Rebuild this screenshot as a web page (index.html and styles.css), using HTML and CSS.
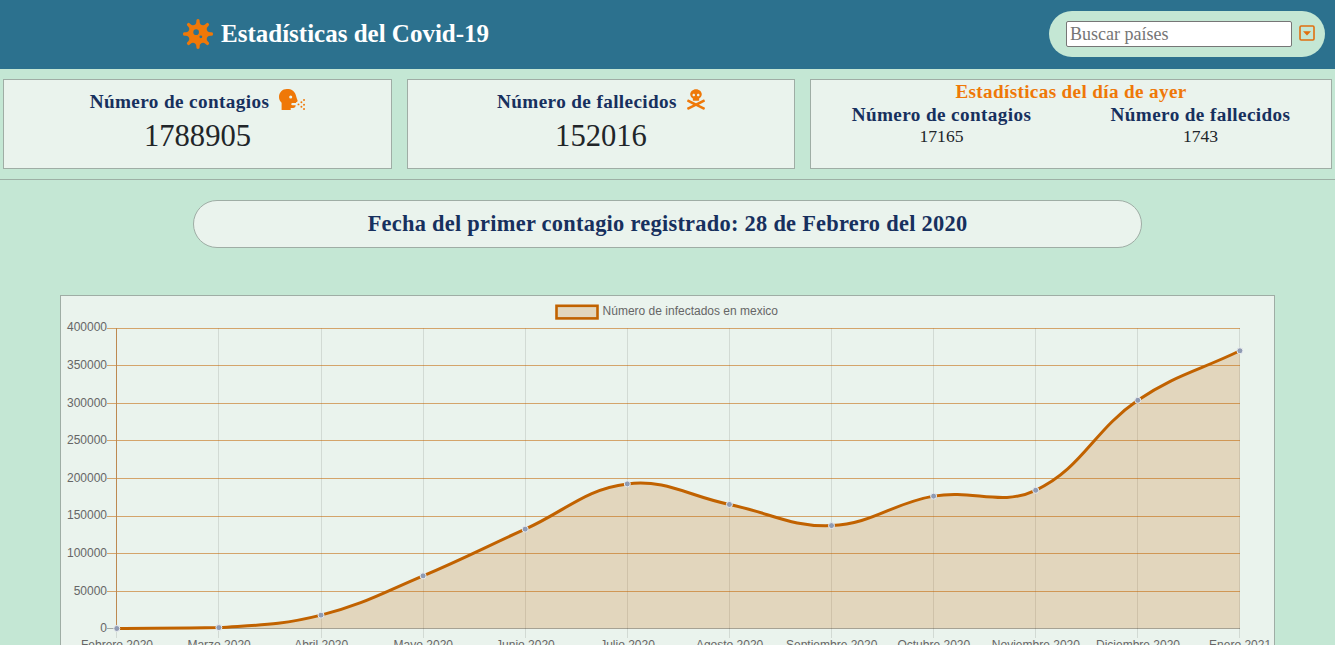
FILE: index.html
```html
<!DOCTYPE html>
<html lang="es">
<head>
<meta charset="utf-8">
<title>Estadísticas del Covid-19</title>
<link rel="stylesheet" href="styles.css">
</head>
<body>
<header class="header">
  <div class="brand">
    <svg class="brand-icon" viewBox="0 0 512 512"><path d="M483.55,227.55H462c-50.68,0-76.07-61.27-40.23-97.11L437,115.19A28.44,28.44,0,0,0,396.8,75L381.56,90.22c-35.84,35.83-97.11,10.45-97.11-40.23V28.44a28.45,28.45,0,0,0-56.9,0V50c0,50.68-61.27,76.06-97.11,40.23L115.2,75A28.44,28.44,0,0,0,75,115.19l15.25,15.25c35.84,35.84,10.45,97.11-40.23,97.11H28.45a28.45,28.45,0,1,0,0,56.89H50c50.68,0,76.07,61.28,40.23,97.12L75,396.8A28.45,28.45,0,0,0,115.2,437l15.24-15.25c35.84-35.84,97.11-10.45,97.11,40.23v21.54a28.45,28.45,0,0,0,56.9,0V462c0-50.68,61.27-76.07,97.11-40.23L396.8,437A28.45,28.45,0,0,0,437,396.8l-15.25-15.24c-35.84-35.84-10.45-97.12,40.23-97.12h21.54a28.45,28.45,0,1,0,0-56.89ZM224,272a48,48,0,1,1,48-48A48,48,0,0,1,224,272Zm80,56a24,24,0,1,1,24-24A24,24,0,0,1,304,328Z"/></svg>
    <h1 class="brand-title">Estadísticas del Covid-19</h1>
  </div>
  <div class="search">
    <input class="search-input" type="text" placeholder="Buscar países">
    <svg class="search-icon" viewBox="0 0 16 16"><rect x="1" y="1" width="14" height="14" rx="1.2" fill="none" stroke="currentColor" stroke-width="1.6"/><path d="M4 6.2h8L8 10.5z" fill="currentColor"/></svg>
  </div>
</header>
<section class="stats">
  <article class="card">
    <h2 class="card-title">Número de contagios <svg class="cough" viewBox="0 0 640 512"><path fill-rule="evenodd" d="M455 275c-21-47.1-38.5-131.7-63.1-176.7C350 30 290 0 234.1 0H192C86 0 0 86 0 192c0 56.8 24.8 107.6 64 142.9V512h224v-48h64a64 64 0 0 0 60-64H330a24 24 0 0 1 0-56h92v-24a32 32 0 0 0 33-45zM288 232a38 38 0 1 1 0-76 38 38 0 0 1 0 76z"/><circle cx="616" cy="270" r="24"/><circle cx="552" cy="322" r="24"/><circle cx="616" cy="384" r="24"/><circle cx="480" cy="376" r="24"/><circle cx="552" cy="432" r="24"/><circle cx="616" cy="488" r="24"/></svg></h2>
    <p class="card-number">1788905</p>
  </article>
  <article class="card">
    <h2 class="card-title">Número de fallecidos <svg class="skull" viewBox="0 0 448 512"><path d="M439.15 453.06L297.17 384l141.99-69.06c7.9-3.95 11.11-13.56 7.15-21.46L432 264.85c-3.95-7.9-13.56-11.11-21.47-7.16L224 348.41 37.47 257.69c-7.9-3.95-17.51-.75-21.47 7.16L1.69 293.48c-3.95 7.9-.75 17.51 7.15 21.46L150.83 384 8.85 453.06c-7.9 3.95-11.11 13.56-7.15 21.47l14.31 28.63c3.95 7.9 13.56 11.11 21.47 7.15L224 419.59l186.53 90.72c7.9 3.95 17.51.75 21.47-7.15l14.31-28.63c3.95-7.91.74-17.52-7.16-21.47zM150 237.28l-5.48 25.87c-2.67 12.62 5.42 24.85 16.45 24.85h126.08c11.03 0 19.12-12.23 16.45-24.85l-5.5-25.87c41.78-22.41 70-62.75 70-109.28C368 57.31 303.53 0 224 0S80 57.31 80 128c0 46.53 28.22 86.87 70 109.28zM280 112c17.65 0 32 14.35 32 32s-14.35 32-32 32-32-14.35-32-32 14.35-32 32-32zm-112 0c17.65 0 32 14.35 32 32s-14.35 32-32 32-32-14.35-32-32 14.35-32 32-32z"/></svg></h2>
    <p class="card-number">152016</p>
  </article>
  <article class="card card-day">
    <h2 class="day-title">Estadísticas del día de ayer</h2>
    <div class="day-grid">
      <div><h3 class="day-label">Número de contagios</h3><p class="day-number">17165</p></div>
      <div><h3 class="day-label">Número de fallecidos</h3><p class="day-number">1743</p></div>
    </div>
  </article>
</section>
<main class="main">
  <h2 class="first-date">Fecha del primer contagio registrado: 28 de Febrero del 2020</h2>
  <div class="chart-panel"><svg class="chart" id="chart" viewBox="61 296 1213 400"></svg></div>
</main>
<script src="chart.js"></script>
</body>
</html>
```
FILE: styles.css
```css
* { box-sizing: border-box; margin: 0; padding: 0; }
body {
  height: 645px;
  overflow: hidden;
  background: #c4e7d4;
  color: #212529;
  font-family: "Liberation Serif", "Times New Roman", serif;
}
.header {
  display: flex;
  justify-content: space-between;
  align-items: center;
  height: 69px;
  padding: 0 10px 0 183px;
  background: #2c718e;
}
.brand { display: flex; align-items: center; gap: 8px; margin-bottom: 2px; }
.brand-icon { width: 30px; height: 30px; fill: #ef7808; }
.brand-title { color: #fff; font-size: 25px; line-height: 30px; white-space: nowrap; }
.search {
  display: flex;
  align-items: center;
  gap: 7px;
  width: 276px;
  height: 46px;
  margin-bottom: 1px;
  padding-left: 17px;
  border-radius: 23px;
  background: #c4e7d4;
}
.search-input {
  width: 226px;
  height: 26px;
  padding: 1px 3px;
  border: 1px solid #767676;
  border-radius: 2px;
  background: #fff;
  font-family: inherit;
  font-size: 18px;
}
.search-input::placeholder { color: #757575; }
.search-icon { width: 16px; height: 16px; color: #e0700f; margin-bottom: 2px; }
.stats {
  display: grid;
  grid-template-columns: 389px 388px 522px;
  justify-content: space-between;
  height: 111px;
  padding: 10px 3px;
  border-bottom: 1px solid #9db0a5;
}
.card {
  height: 90px;
  border: 1px solid #9fada5;
  background: #eaf3ed;
  text-align: center;
}
.card-title {
  display: flex;
  justify-content: center;
  gap: 10px;
  padding-top: 9px;
  color: #17305e;
  font-size: 19.2px;
  line-height: 25px;
  letter-spacing: .38px;
}
.cough { width: 26px; height: 21px; fill: #ef7808; }
.skull { width: 18px; height: 21px; fill: #ef7808; }
.card-number { font-size: 30.6px; line-height: 44px; }
.day-title { color: #ef7808; font-size: 19.2px; line-height: 23px; letter-spacing: .34px; }
.day-grid { display: grid; grid-template-columns: 1fr 1fr; padding: 0 1px; }
.day-label { color: #17305e; font-size: 19.2px; line-height: 23px; letter-spacing: .38px; }
.day-number { font-size: 17.6px; line-height: 21px; }
.main { padding-top: 20px; }
.first-date {
  width: 949px;
  height: 48px;
  margin: 0 auto 47px;
  border: 1px solid #9fada5;
  border-radius: 24px;
  background: #eaf3ed;
  color: #17305e;
  font-size: 22.4px;
  line-height: 46px;
  letter-spacing: .27px;
  text-align: center;
}
.chart-panel {
  width: 1215px;
  margin: 0 auto;
  border: 1px solid #9fada5;
  background: #eaf3ed;
}
.chart { display: block; width: 1213px; height: 400px; }
.chart text { fill: #666; font: 12px "Liberation Sans", Arial, sans-serif; }
.grid-y { stroke: rgba(193, 98, 0, .55); }
.grid-x { stroke: rgba(0, 0, 0, .1); }
.axis-y { stroke: #bd8950; }
.zero { stroke: rgba(0, 0, 0, .3); }
.area { fill: rgba(193, 98, 0, .2); }
.line { fill: none; stroke: #c16200; stroke-width: 3; }
.point { fill: #8f9bb3; stroke: #e9ecef; stroke-width: 1; }
.legend-box { fill: rgba(193, 98, 0, .2); stroke: #c16200; stroke-width: 2.6; }
```
FILE: chart.js
```js
const months = ['Febrero 2020', 'Marzo 2020', 'Abril 2020', 'Mayo 2020', 'Junio 2020', 'Julio 2020',
  'Agosto 2020', 'Septiembre 2020', 'Octubre 2020', 'Noviembre 2020', 'Diciembre 2020', 'Enero 2021'];
const values = [4, 1211, 17800, 70200, 132500, 192800, 165400, 137200, 176500, 184300, 304300, 370300];
const left = 116.8, right = 1239.9, top0 = 328.5, bottom = 628.5;
const step = (right - left) / 11;
const px = i => left + step * i;
const py = v => bottom - v / 400000 * (bottom - top0);
const pts = values.map((v, i) => ({ x: px(i), y: py(v) }));

// Cubic control points, tension 0.4, kept inside the plot area
const clamp = y => Math.max(top0, Math.min(bottom, y));
const ctrl = pts.map((p, i) => {
  const a = pts[Math.max(0, i - 1)], b = pts[Math.min(11, i + 1)];
  const d1 = Math.hypot(p.x - a.x, p.y - a.y), d2 = Math.hypot(b.x - p.x, b.y - p.y);
  const f1 = 0.4 * d1 / (d1 + d2), f2 = 0.4 * d2 / (d1 + d2);
  return {
    px: p.x - f1 * (b.x - a.x), py: clamp(p.y - f1 * (b.y - a.y)),
    nx: p.x + f2 * (b.x - a.x), ny: clamp(p.y + f2 * (b.y - a.y))
  };
});
let d = `M${pts[0].x} ${pts[0].y}`;
for (let i = 1; i < 12; i++) {
  d += `C${ctrl[i - 1].nx} ${ctrl[i - 1].ny} ${ctrl[i].px} ${ctrl[i].py} ${pts[i].x} ${pts[i].y}`;
}

let out = '';
months.forEach((m, i) => {
  const x = Math.floor(px(i)) + .5;
  out += `<path class="grid-x" d="M${x} 328V638"/><text x="${px(i) + .2}" y="649" text-anchor="middle">${m}</text>`;
});
const rows = [628, 591, 553, 516, 478, 440, 403, 365, 328];
const labels = [632, 595, 557, 519, 482, 444, 407, 369, 331];
rows.forEach((row, i) => {
  const y = row + .5;
  out += `<path class="${i ? 'grid-y' : 'zero'}" d="M107 ${y}H1240"/><text x="107" y="${labels[i]}" text-anchor="end">${i * 50000}</text>`;
});
out += '<path class="axis-y" d="M116.5 328V628"/>';
out += `<path class="area" d="${d}V${bottom}H${left}Z"/><path class="line" d="${d}"/>`;
out += pts.map(p => `<circle class="point" cx="${p.x}" cy="${p.y}" r="3"/>`).join('');
out += '<rect class="legend-box" x="556.5" y="305.8" width="41" height="12.6"/><text x="602.6" y="315">Número de infectados en mexico</text>';
document.getElementById('chart').innerHTML = out;
```
